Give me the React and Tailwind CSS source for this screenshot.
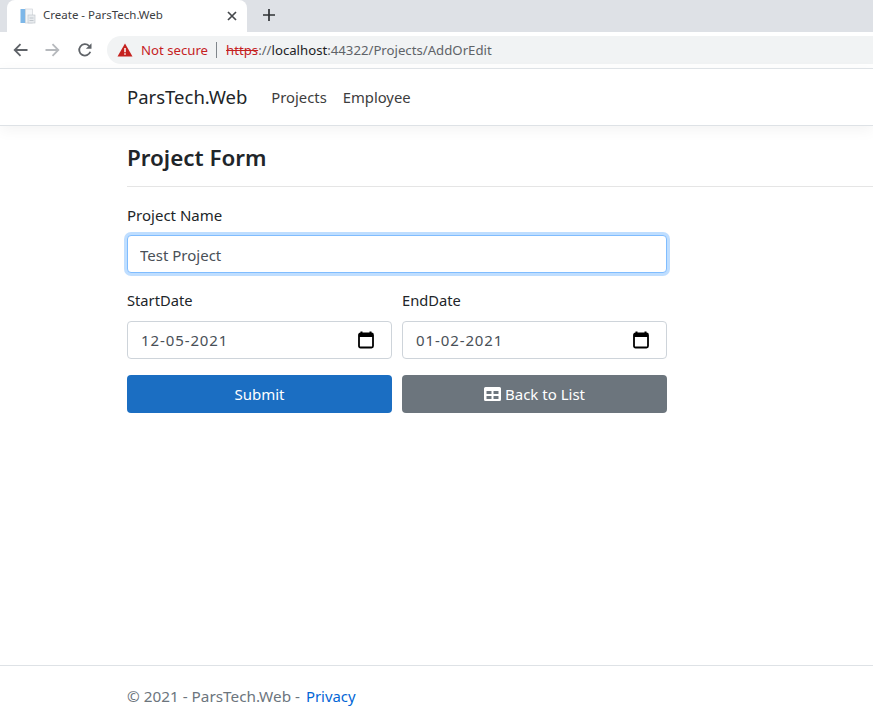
import React from 'react';

const font = { fontFamily: '"Noto Sans", "Open Sans", sans-serif' };

function CalendarIcon() {
  return (
    <svg width="16" height="18" viewBox="0 0 16 18" className="text-black">
      <path d="M3.5 0.5v3M12.500 0.5v3" stroke="currentColor" strokeWidth="2" />
      <rect x="1" y="2.500" width="14" height="14" rx="1.500" fill="none" stroke="currentColor" strokeWidth="1.800" />
      <rect x="1" y="2.500" width="14" height="3.500" fill="currentColor" />
    </svg>
  );
}

function DateField({ label, value }) {
  return (
    <div className="flex-1">
      <div className="mb-[9px] h-[24px] text-[14.7px] leading-[24px] text-[#212529]">{label}</div>
      <div className="flex h-[38px] items-center justify-between rounded-[4px] border border-[#ced4da] bg-white pl-[13px] pr-[17px] text-[15px] tracking-[0.9px] text-[#495057]">
        <span>{value}</span>
        <CalendarIcon />
      </div>
    </div>
  );
}

function BrowserChrome() {
  return (
    <div>
      <div className="flex h-[32px] items-end bg-[#dee1e6] pl-[7px]">
        <div className="flex h-[32px] w-[240px] items-center rounded-t-[8px] bg-white pl-[13px] pr-[10px]">
          <svg width="16" height="16" viewBox="0 0 16 16">
            <rect x="0.500" y="1" width="5" height="14" fill="#7db7e8" />
            <rect x="5.500" y="1" width="7" height="14" fill="#f4f6f8" stroke="#c9ced3" strokeWidth="0.600" />
            <rect x="8" y="7" width="7" height="8" fill="#e8ebee" stroke="#bcc2c8" strokeWidth="0.600" />
            <path d="M9.500 10h4M9.500 12.500h4" stroke="#b5bcc3" strokeWidth="0.800" />
          </svg>
          <span className="ml-[7px] flex-1 pb-[3px] text-[11.5px] text-[#3c4043]">Create - ParsTech.Web</span>
          <svg width="10" height="10" viewBox="0 0 10 10">
            <path d="M1 1l8 8M9 1l-8 8" stroke="#45484c" strokeWidth="1.700" />
          </svg>
        </div>
        <div className="ml-[16px] flex h-[32px] items-center pb-[3px]">
          <svg width="12" height="12" viewBox="0 0 12 12">
            <path d="M6 0v12M0 6h12" stroke="#2f3235" strokeWidth="1.700" />
          </svg>
        </div>
      </div>
      <div className="flex h-[36px] items-center bg-white pl-[13px]">
        <svg width="15" height="14" viewBox="0 0 15 14">
          <path d="M14.500 7H2M7.500 1.200L1.700 7l5.800 5.800" fill="none" stroke="#5f6368" strokeWidth="1.800" />
        </svg>
        <svg width="15" height="14" viewBox="0 0 15 14" className="ml-[17px]">
          <path d="M0.500 7H13M7.500 1.200L13.300 7l-5.800 5.800" fill="none" stroke="#b6b9bd" strokeWidth="1.800" />
        </svg>
        <svg width="16" height="16" viewBox="0 0 16 16" className="ml-[17px]">
          <path d="M13.300 9.800A5.700 5.700 0 1 1 12 3.900" fill="none" stroke="#5f6368" strokeWidth="1.800" />
          <path d="M14.500 1.200v5.600H8.900z" fill="#5f6368" />
        </svg>
        <div className="ml-[14px] flex h-[28px] flex-1 items-center rounded-l-full bg-[#f1f3f4] pl-[10px] text-[13.2px]">
          <svg width="16" height="14" viewBox="0 0 16 14">
            <path d="M8 0.500L15.500 13.500H0.500z" fill="#c5221f" />
            <path d="M8 5v4.200M8 10.200v1.600" stroke="#fff" strokeWidth="1.500" />
          </svg>
          <span className="ml-[8px] pt-[1px] text-[#c5221f]">Not secure</span>
          <span className="ml-[8px] h-[16px] w-px bg-[#80868b]" />
          <span className="ml-[9px] pt-[1px] text-[#c5221f] line-through">https</span>
          <span className="pt-[1px] text-[#5f6368]">://</span>
          <span className="pt-[1px] text-[#202124]">localhost</span>
          <span className="pt-[1px] text-[#5f6368]">:44322/Projects/AddOrEdit</span>
        </div>
      </div>
    </div>
  );
}

export default function App() {
  return (
    <div style={font} className="flex h-[717px] w-[873px] flex-col overflow-hidden bg-white">
      <BrowserChrome />

      <nav className="flex h-[58px] items-center border-y border-[#dee2e6] bg-white pl-[127px] shadow-[0_4px_14px_rgba(0,0,0,0.05)]">
        <span className="text-[18.5px] text-[#212529]">ParsTech.Web</span>
        <span className="ml-[24px] text-[14.8px] text-[#3d3d3d]">Projects</span>
        <span className="ml-[16px] text-[14.8px] text-[#3d3d3d]">Employee</span>
      </nav>

      <main className="flex-1 pl-[127px]">
        <h1 className="flex h-[61px] items-center border-b border-[#e5e5e5] pt-[3px] text-[22.4px] font-semibold text-[#212529]">
          Project Form
        </h1>

        <div className="w-[540px] pt-[16px]">
          <div className="mb-[8px] h-[24px] text-[15px] leading-[24px] text-[#212529]">Project Name</div>
          <input
            readOnly
            value="Test Project"
            className="h-[38px] w-full rounded-[4px] border border-[#80bdff] bg-white px-[12px] pt-[1px] text-[15px] text-[#495057] shadow-[0_0_0_3px_rgba(0,123,255,0.25)] outline-none"
          />

          <div className="mt-[15px] flex gap-[10px]">
            <DateField label="StartDate" value="12-05-2021" />
            <DateField label="EndDate" value="01-02-2021" />
          </div>

          <div className="mt-[16px] flex gap-[10px]">
            <button className="h-[38px] flex-1 rounded-[4px] bg-[#1b6ec2] text-[15px] text-white">Submit</button>
            <button className="flex h-[38px] flex-1 items-center justify-center rounded-[4px] bg-[#6c757d] text-[15px] text-white">
              <svg width="17" height="14" viewBox="0 0 17 14" className="mr-[4px]">
                <path
                  fillRule="evenodd"
                  fill="#fff"
                  d="M1.500 0h14A1.500 1.500 0 0 1 17 1.500v11a1.500 1.500 0 0 1-1.500 1.500h-14A1.500 1.500 0 0 1 0 12.500v-11A1.500 1.500 0 0 1 1.500 0zM2.500 4v3h5V4zm7 0v3h5V4zm-7 5v3h5V9zm7 0v3h5V9z"
                />
              </svg>
              Back to List
            </button>
          </div>
        </div>
      </main>

      <footer className="h-[52px] border-t border-[#dee2e6] pl-[127px] pt-[19px] text-[15.3px] text-[#6c757d]">
        <span>
          © 2021 - ParsTech.Web - <span className="ml-[2px] text-[14.9px] text-[#0366d6]">Privacy</span>
        </span>
      </footer>
    </div>
  );
}
